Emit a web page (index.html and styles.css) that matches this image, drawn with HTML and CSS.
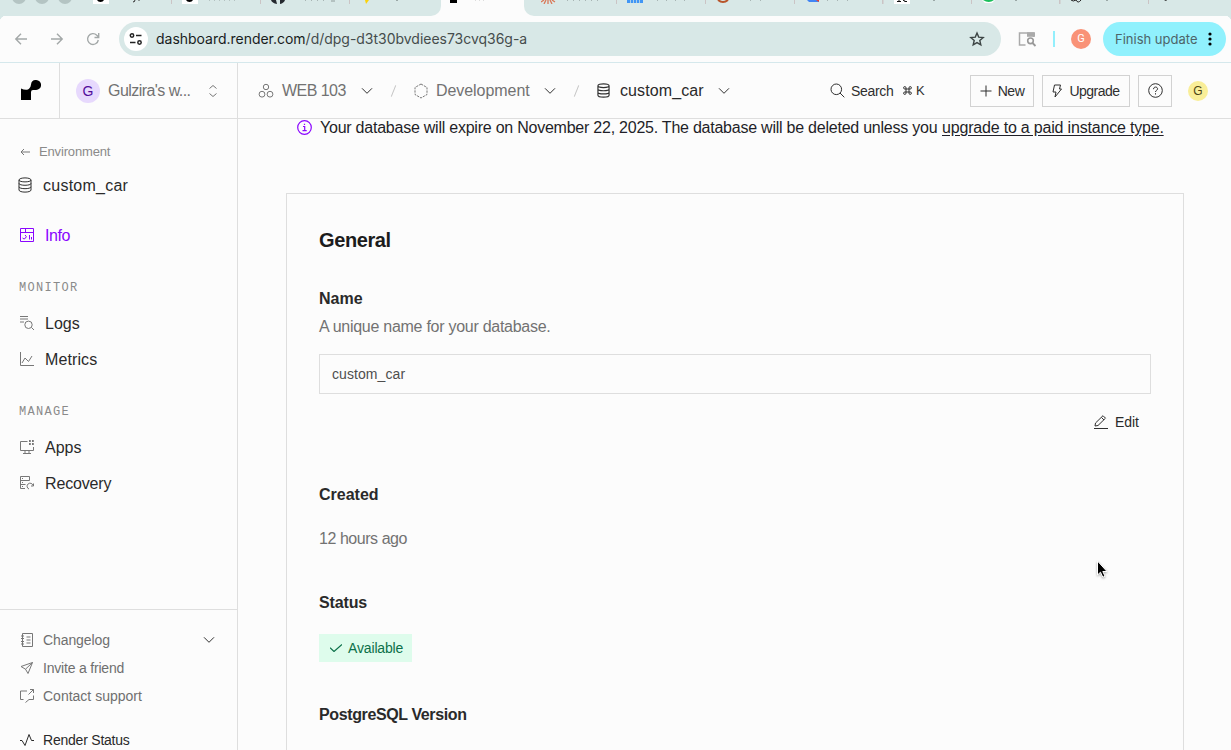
FILE: index.html
```html
<!DOCTYPE html>
<html lang="en">
<head>
<meta charset="utf-8">
<title>custom_car</title>
<link rel="stylesheet" href="styles.css">
</head>
<body>
<svg class="defs" width="0" height="0">
  <symbol id="db" viewBox="0 0 14 16"><path d="M1 3C1 .200 13 .200 13 3V13C13 15.800 1 15.800 1 13ZM1 3C1 5.500 13 5.500 13 3M1 6.400C1 8.900 13 8.900 13 6.400M1 9.800C1 12.300 13 12.300 13 9.800"/></symbol>
  <symbol id="chev" viewBox="0 0 12 8"><path d="M1 1.300 6 6.300 11 1.300"/></symbol>
</svg>
<div class="tabs">
  <div class="lights"><i></i><i></i><i></i></div>
  <div class="tab"><svg width="78" height="4"><path fill="#fff" d="M0 0h16v4H0z"/><path fill="#000" d="M4 0h7q-1 2-3.500 2T4 0"/><path stroke="#444" d="M42 0q0 2-2 2M46 0v1"/></svg></div>
  <div class="tab"><svg width="78" height="4"><path fill="#fff" d="M0 0h16v4H0z"/><path fill="#000" d="M4 0h7q-1 2-3.500 2T4 0"/><path stroke="#b4c2c1" stroke-dasharray="1 4" d="M27 .5h26"/></svg></div>
  <div class="tab"><svg width="78" height="4"><path fill="#24292f" d="M0 0h5l1 4Q1 3 0 0M9 0h5q-1 3-5 4z"/><path stroke="#a8b5b4" stroke-dasharray="1 5" d="M34 .5h20"/><path fill="#b4c2c1" d="M60 0h4v2h-4z"/></svg></div>
  <div class="tab plain"><svg width="78" height="4"><path fill="#fbd20b" d="M2 0h4L3 4z"/><path stroke="#9ba8a7" d="M33 .5h2"/></svg></div>
  <div class="tab active"><svg width="78" height="4"><path d="M0 0h7v3H0z"/><path stroke="#ddd" stroke-dasharray="1 3" d="M25 .5h9"/></svg></div>
  <div class="tab wide"><svg width="78" height="4"><path stroke="#d97757" stroke-width="1.300" d="m3 0-3 2M5 0 3 4M7 0v4M9 0l2 4M11 0l3 2"/><path stroke="#a8b5b4" stroke-dasharray="1 5" d="M26 .5h32"/></svg></div>
  <div class="tab"><svg width="78" height="4"><path fill="#4096f5" d="M0 0h16v3H0z"/><path stroke="#d9e8e7" stroke-width=".7" d="M3.500 0v3M6.500 0v3M9.500 0v3M12.500 0v3"/><path stroke="#a8b5b4" stroke-dasharray="1 8" d="M30 .5h30"/></svg></div>
  <div class="tab"><svg width="78" height="4"><path fill="none" stroke="#b8552b" stroke-width="2" d="M2 0q5 4 10 0"/><path stroke="#a8b5b4" stroke-dasharray="1 9" d="M34 .5h20"/></svg></div>
  <div class="tab"><svg width="78" height="4"><path fill="#4285f4" d="M2 0h12v2H4z"/><path fill="#ea4335" d="M11 0h3v2z"/><path stroke="#a8b5b4" stroke-dasharray="1 9" d="M22 .5h24"/></svg></div>
  <div class="tab"><svg width="78" height="4"><path fill="#fff" d="M0 0h16v4H0z"/><path stroke="#111" d="M3 1.500h4M9 0l2 1.500h2M5 0v2"/><path stroke="#9ba8a7" d="M39 .5h2"/></svg></div>
  <div class="tab"><svg width="78" height="4"><path fill="#fff" d="M0 0h13l-3 3H3z"/><path fill="#1bbf5c" d="M1 0h11Q7 4 1 0"/><path stroke="#9ba8a7" d="M33 .5h2"/></svg></div>
  <div class="tab"><svg width="78" height="4"><path fill="none" stroke="#222" d="M0 0q2 2 5 0q2 4 5 0"/><path stroke="#9ba8a7" d="M35 .5h2"/></svg></div>
  <div class="tab plain"><svg width="60" height="4"><path fill="#222" d="M5 0h3l-1 1z"/></svg></div>
</div>
<div class="toolbar">
  <svg class="nav" width="14" height="14" viewBox="0 0 14 14"><path d="M13 7H2M7 1.800 1.800 7 7 12.200"/></svg>
  <svg class="nav" width="14" height="14" viewBox="0 0 14 14"><path d="M1 7h11M7 1.800 12.200 7 7 12.200"/></svg>
  <svg class="nav" width="14" height="14" viewBox="0 0 14 14"><path d="M12.300 8A5.400 5.400 0 1 1 10.800 3.200L12.700 5M12.700 1v4.500H8.500"/></svg>
  <div class="omni">
    <span class="tune"><svg width="14" height="14" viewBox="0 0 14 14"><circle cx="3" cy="3.500" r="1.700"/><path d="M7 3.500h5.500M1 10.500h5.500"/><circle cx="10.500" cy="10.500" r="1.700"/></svg></span>
    <span class="url"><b>dashboard.render.com</b>/d/dpg-d3t30bvdiees73cvq36g-a</span>
    <svg class="star" width="16" height="16" viewBox="0 0 16 16"><path d="m8 2 1.700 4.100 4.500.400-3.400 3 1 4.400L8 11.600l-3.800 2.300 1-4.400-3.400-3 4.500-.4z"/></svg>
  </div>
  <svg class="lens" width="19" height="16" viewBox="0 0 19 16"><path d="M7.500 14H1.500V2h14v4" fill="none" stroke="#aaa" stroke-width="1.500"/><path fill="#aaa" d="M9 1.300h8v4.500H9z"/><circle cx="12.500" cy="9.800" r="2.800" fill="none" stroke="#999" stroke-width="1.600"/><path stroke="#999" stroke-width="1.800" d="m14.500 12 3 3"/></svg>
  <i class="divider"></i>
  <span class="me">G</span>
  <div class="update"><span>Finish update</span><svg width="4" height="16"><circle cx="2" cy="3" r="1.600"/><circle cx="2" cy="8" r="1.600"/><circle cx="2" cy="13" r="1.600"/></svg></div>
</div>
<header class="top">
  <div class="logo"><svg width="20" height="20" viewBox="0 0 20 20"><path d="M15.200 0A5 5 0 0 0 10 4.400C9.600 7.500 8 9.800 5 9.800Q2.500 9.800 0 8.500V20h10v-8q0-2 2-2h3A5 5 0 1 0 15.200 0Z"/></svg></div>
  <div class="workspace"><span class="avatar">G</span><span class="wname">Gulzira's w...</span><svg class="line" width="10" height="14" viewBox="0 0 10 14"><path d="M1.500 4.500 5 1.500l3.500 3M1.500 9.500 5 12.500l3.500-3"/></svg></div>
  <nav class="crumbs">
    <svg class="line" width="16" height="16" viewBox="0 0 16 16"><circle cx="8" cy="4" r="2.700"/><circle cx="4" cy="11.200" r="2.900"/><circle cx="12" cy="11.200" r="2.900"/></svg>
    <span class="c1">WEB 103</span><svg class="line dark" width="12" height="8"><use href="#chev"/></svg>
    <span class="slash"></span>
    <svg class="line" width="14" height="16" viewBox="0 0 14 16"><path stroke-dasharray="2.300 1" d="M7 1 13 4.500v7L7 15 1 11.500v-7z"/></svg>
    <span class="c2">Development</span><svg class="line dark" width="12" height="8"><use href="#chev"/></svg>
    <span class="slash"></span>
    <svg class="line dark dbi" width="13" height="15"><use href="#db"/></svg>
    <span class="c3">custom_car</span><svg class="line dark" width="12" height="8"><use href="#chev"/></svg>
  </nav>
  <div class="actions">
    <div class="search"><svg class="line dark" width="15" height="15" viewBox="0 0 15 15"><circle cx="6.300" cy="6.300" r="5.300"/><path d="m10 10 4.300 4.300"/></svg><span class="s1">Search</span><svg class="line dark cmd" width="9" height="9" viewBox="0 0 9 9"><path d="M3 3h3v3H3zM3 3V1.800A1.200 1.200 0 1 0 1.800 3H3M6 3h1.200A1.200 1.200 0 1 0 6 1.800V3M6 6v1.200A1.200 1.200 0 1 0 7.200 6H6M3 6H1.800A1.200 1.200 0 1 0 3 7.200V6"/></svg><span class="key">K</span></div>
    <div class="btn new"><svg class="line dark" width="12" height="12" viewBox="0 0 12 12"><path d="M6 .5v11M.5 6h11"/></svg><span>New</span></div>
    <div class="btn up"><svg class="line dark" width="10" height="14" viewBox="0 0 10 14"><path d="M2.500 1h6L7.500 5h2L3 13l1-5H1z"/></svg><span>Upgrade</span></div>
    <div class="btn help"><svg class="line dark" width="15" height="15" viewBox="0 0 15 15"><circle cx="7.500" cy="7.500" r="6.800"/><path d="M5.500 6.200C5.500 3.300 9.600 3.500 9.600 5.900 9.600 7.400 7.500 7.200 7.500 9M7.500 10.200v1.300"/></svg></div>
    <span class="user">G</span>
  </div>
</header>
<div class="shell">
  <aside>
    <div class="back"><svg class="line" width="10" height="8" viewBox="0 0 10 8"><path d="M10 4H1M4 1 1 4l3 3"/></svg><span>Environment</span></div>
    <div class="svc"><svg class="line dark" width="14" height="16"><use href="#db"/></svg><span>custom_car</span></div>
    <div class="item on"><svg class="line" width="14" height="14" viewBox="0 0 14 14"><path d="M.5.500h13v13H.5zM.5 4.500h13M5.500.500v4M5 7a2 2 0 1 1-2.500 3M9.500 7v4.500M11.500 9v2.500"/></svg><span class="t-info">Info</span></div>
    <h6>MONITOR</h6>
    <div class="item"><svg class="line" width="14" height="14" viewBox="0 0 14 14"><path d="M0 .5h8M0 3h8M0 6h4M11.500 11.500 14 14"/><circle cx="8.500" cy="8.800" r="3.700"/></svg><span>Logs</span></div>
    <div class="item"><svg class="line" width="14" height="14" viewBox="0 0 14 14"><path d="M.5 0v13.500H14M2 11l3-5 3.500 3.500L12 4"/></svg><span class="t-met">Metrics</span></div>
    <h6 class="manage">MANAGE</h6>
    <div class="item"><svg class="line" width="14" height="14" viewBox="0 0 14 14"><path d="M7.500 1.500h-7v9h13V7M5 10.500v3M9 10.500v3M3 13.500h8"/><path stroke-width="1.800" stroke-dasharray="1.800 1.200" d="M9 1h5M9 4h5"/></svg><span class="t-apps">Apps</span></div>
    <div class="item"><svg class="line" width="14" height="14" viewBox="0 0 14 14"><path d="M5 12.500H.5V.500h9v4H.5M.5 8.500h5M2 2.500h1M2 6.500h1M2 10.500h1M9 13A3 3 0 1 1 13 9.500M13.500 7.500v2.500H11"/></svg><span class="t-rec">Recovery</span></div>
    <footer>
      <div class="f"><svg class="line" width="14" height="14" viewBox="0 0 14 14"><path d="M2.500.500h10v13h-10zM1 3h3M1 5.500h3M1 8.500h3M1 11h3M6.500 4h4M6.500 7h4M6.500 10h4"/></svg><span class="t-cl">Changelog</span><svg class="line dark end" width="12" height="8"><use href="#chev"/></svg></div>
      <div class="f"><svg class="line" width="14" height="14" viewBox="0 0 14 14"><path d="M12.500 1.500 1 5.500l4.500 2.700L8 12.500zM12.500 1.500l-7 6.700"/></svg><span class="t-inv">Invite a friend</span></div>
      <div class="f"><svg class="line" width="14" height="14" viewBox="0 0 14 14"><path d="M7 2H.5v8.500h3M13.500 6.500v4H9l-3.500 3M8.500 5.500l5-5M10 .5h3.500V4"/></svg><span>Contact support</span></div>
      <div class="f status"><svg class="line" width="14" height="14" viewBox="0 0 14 14"><path d="M0 7.500h2L5 12.500 9 1.500l2.500 6H14"/></svg><span class="t-st">Render Status</span></div>
    </footer>
  </aside>
  <main>
    <div class="notice"><svg width="15" height="15" viewBox="0 0 15 15"><circle cx="7.500" cy="7.500" r="6.800"/><path d="M6 6.500h1.700v4M5.500 10.700h4.200M7.500 3.700v1.300"/></svg><span class="n1">Your database will expire on November 22, 2025. The database will be deleted unless you</span><a class="n2">upgrade to a paid instance type.</a></div>
    <section class="card">
      <h2>General</h2>
      <h3 class="name">Name</h3>
      <p class="desc">A unique name for your database.</p>
      <div class="input"><span>custom_car</span></div>
      <div class="edit"><svg class="line dark" width="14" height="14" viewBox="0 0 14 14"><path d="M0 13.500h14M1 11l.5-3 7.500-7.300 2.500 2.500L4 10.500zM7.500 2.500 10 5"/></svg><span>Edit</span></div>
      <h3 class="created">Created</h3>
      <p class="ago">12 hours ago</p>
      <h3 class="stat">Status</h3>
      <div class="badge"><svg width="12" height="8" viewBox="0 0 12 8"><path d="m0 3.700 4 3.800L12 .5"/></svg><span>Available</span></div>
      <h3 class="pg">PostgreSQL Version</h3>
    </section>
  </main>
</div>
<svg class="cursor" width="14" height="20" viewBox="0 0 14 20"><path d="M1.500 1v14l3-2.800 2.300 5L9 16.200l-2.200-4.700H11z"/></svg>
</body>
</html>
```
FILE: styles.css
```css
* { box-sizing: border-box; margin: 0; padding: 0; }
body { width: 1231px; height: 750px; overflow: hidden; background: #fcfcfc; color: #2a2a2a; font: 16px/24px "Liberation Sans", Arial, sans-serif; display: flex; flex-direction: column; }
svg { flex: none; display: block; }
span, a { white-space: nowrap; }
.defs { position: absolute; }
.line { fill: none; stroke: #777; stroke-width: 1; }
.line.dark { stroke: #2f2f2f; }

.tabs { height: 16px; flex: none; background: #fcfcfc; display: flex; overflow: hidden; }
.lights { width: 83px; flex: none; display: flex; gap: 9px; padding: 0 0 12px 12px; height: 16px; overflow: hidden; align-items: flex-end; background: #d8e8e7; }
.lights i { width: 14px; height: 14px; border-radius: 50%; background: #b4c4c3; flex: none; }
.tab { width: 89px; flex: none; padding-left: 10px; background: linear-gradient(#cbc4c5, #cbc4c5) right top / 1.5px 4px no-repeat #d8e8e7; }
.tab.plain { background: #d8e8e7; }
.tab:nth-child(5) { width: 91px; padding-left: 13px; border-bottom-right-radius: 10px; }
.tab.active { width: 83px; padding-left: 9px; background: #fcfcfc; }
.tab.wide { width: 93px; padding-left: 17px; border-bottom-left-radius: 10px; }
.tab:nth-child(n+10) { width: 88.500px; }

.toolbar { height: 47px; flex: none; display: flex; align-items: center; border-bottom: 1px solid #d5e8ec; padding-left: 14px; background: radial-gradient(circle at 6px 6px, #fcfcfc 6px, #d8e8e7 6.500px) left top / 6px 6px no-repeat, radial-gradient(circle at 0 6px, #fcfcfc 6px, #d8e8e7 6.500px) right top / 6px 6px no-repeat #fcfcfc; }
.nav { fill: none; stroke: #a3a8a8; stroke-width: 1.400; margin-right: 22px; }
.omni { width: 882px; height: 34px; border-radius: 17px; background: #d8e8e7; display: flex; align-items: center; padding: 0 16px 0 5px; margin-left: -3px; }
.tune { width: 24px; height: 24px; border-radius: 50%; background: #fff; display: flex; align-items: center; justify-content: center; margin-right: 8px; }
.tune svg { fill: none; stroke: #222; stroke-width: 1.500; }
.url { font: 14px/20px Inter, sans-serif; color: #454c4c; letter-spacing: -.02px; }
.url b { font-weight: 400; color: #181d1d; }
.star { margin-left: auto; fill: none; stroke: #3c4444; stroke-width: 1.400; }
.lens { margin-left: 17px; }
.divider { width: 2px; height: 16px; background: #93effc; margin-left: 16px; }
.me { width: 20px; height: 20px; border-radius: 50%; background: #f99277; color: #fff; font: 11px/20px Roboto, sans-serif; text-align: center; margin-left: 16px; }
.update { width: 123px; height: 34px; border-radius: 17px; background: #90f1fd; margin-left: 12px; display: flex; align-items: center; padding: 0 14px 0 12px; justify-content: space-between; font: 13px/20px Inter, sans-serif; color: #4d6569; }

.top { height: 56px; flex: none; border-bottom: 1px solid #dedede; display: flex; color: #727272; }
.logo { width: 60px; border-right: 1px solid #dedede; display: flex; align-items: center; padding: 0 0 1px 21px; }
.workspace { width: 178px; border-right: 1px solid #dedede; display: flex; align-items: center; padding: 0 19px 0 16px; }
.wname { letter-spacing: -.55px; }
.avatar { width: 24px; height: 24px; border-radius: 50%; background: #e7d9fd; color: #510d9c; font-size: 14px; text-align: center; margin-right: 8px; }
.workspace svg { margin-left: auto; }
.crumbs { width: 570px; display: flex; align-items: center; padding-left: 20px; }
.crumbs span:not(.slash) { margin-left: 8px; flex: none; }
.crumbs .c1 { width: 64px; margin-right: 15px; letter-spacing: -.55px; }
.crumbs .c2 { width: 94px; margin-right: 14px; letter-spacing: -.06px; }
.crumbs .dbi { stroke-width: 1.250; }
.crumbs .c3 { width: 84px; margin-right: 14px; color: #2a2a2a; margin-left: 10px !important; letter-spacing: .1px; }
.slash { width: 1px; height: 12px; background: #c4c4c4; transform: rotate(22deg); margin: 0 20px; flex: none; }
.actions { flex: 1; display: flex; align-items: center; font-size: 14px; color: #2f2f2f; padding-left: 22px; }
.search { display: flex; align-items: center; width: 140px; }
.search .s1 { margin: 0 10px 0 6px; width: 42px; letter-spacing: -.5px; font-size: 14px; }
.search .s1 { letter-spacing: -.55px; }
.search .s1 { letter-spacing: -.6px; }
.search .s1 { letter-spacing: -.3px; }
.search .cmd { margin-right: 4px; }
.search .key { font-size: 13px; }
.btn { height: 32px; border: 1px solid #d2d2d2; display: flex; align-items: center; justify-content: center; gap: 6px; margin-right: 8px; }
.new { width: 64px; }
.new span { letter-spacing: -.5px; }
.up { width: 88px; gap: 7px; }
.up span { letter-spacing: -.5px; }
.help { width: 34px; margin-right: 16px; }
.user { width: 20px; height: 20px; border-radius: 50%; background: #f9ee98; color: #4d4514; font-size: 12px; line-height: 20px; text-align: center; }

.shell { flex: 1; min-height: 0; display: flex; }
aside { width: 238px; flex: none; border-right: 1px solid #dedede; display: flex; flex-direction: column; padding-top: 21px; }
.back { height: 24px; display: flex; align-items: center; padding-left: 20px; gap: 9px; font-size: 13px; color: #8a8a8a; letter-spacing: -.15px; }
.svc { height: 24px; margin-top: 9px; display: flex; align-items: center; padding-left: 18px; gap: 11px; letter-spacing: .25px; }
.svc span, .item span, .notice span, .notice a { padding-top: 2px; }
.item { height: 36px; display: flex; align-items: center; padding-left: 20px; gap: 11px; }
.item.on { margin-top: 20px; color: #8a05ff; }
.item.on .line { stroke: #8a05ff; }
.t-info { letter-spacing: -.4px; }
.t-met { letter-spacing: .1px; }
.t-rec { letter-spacing: -.15px; }
h6 { font: 12px/18px "Liberation Mono", monospace; height: 16px; letter-spacing: 1.300px; color: #8a8a8a; padding-left: 19px; margin: 26px 0 10px; }
footer { margin-top: auto; height: 141px; flex: none; border-top: 1px solid #dedede; padding-top: 16px; color: #6f6f6f; font-size: 14px; }
.f { height: 28px; display: flex; align-items: center; padding-left: 20px; gap: 9px; }
.t-cl { letter-spacing: -.1px; }
.t-inv { letter-spacing: -.2px; }
.t-st { letter-spacing: -.22px; }
.end { margin: 0 22px 0 auto; }
.status { margin-top: 16px; color: #2a2a2a; }
.status .line { stroke: #2a2a2a; }

main { flex: 1; padding: 0 47px 0 48px; overflow: hidden; }
.notice { height: 24px; margin-top: -4px; display: flex; align-items: center; padding-left: 10.500px; color: #1f1f28; }
.notice svg { fill: none; stroke: #8a05ff; stroke-width: 1.200; }
.notice .n1 { margin-left: 8.500px; width: 618px; flex: none; letter-spacing: -.235px; }
.n2 { margin-left: 4px; text-decoration: underline; text-underline-offset: 2px; letter-spacing: -.19px; }
.card { margin-top: 54px; border: 1px solid #dedede; height: 700px; padding: 32px; }
h2 { font-size: 20px; line-height: 28px; color: #1c1c1c; letter-spacing: -.4px; }
h3 { font-size: 16px; line-height: 26px; height: 24px; color: #2a2a2a; }
p { line-height: 26px; height: 24px; color: #727272; }
.name { margin-top: 32px; }
.desc { margin-top: 4px; letter-spacing: -.27px; }
.input { height: 40px; margin-top: 16px; border: 1px solid #dedede; padding: 7px 12px; font-size: 14px; color: #4e4e4e; letter-spacing: .08px; }
.edit { height: 40px; margin-top: 8px; padding-right: 12px; display: flex; align-items: center; justify-content: flex-end; gap: 7px; font-size: 14px; }
.created { margin-top: 40px; }
.ago { margin-top: 20px; letter-spacing: -.45px; }
.stat { margin-top: 40px; letter-spacing: -.15px; }
.badge { margin-top: 20px; width: 93px; height: 28px; background: #defcec; color: #0c7049; display: flex; align-items: center; padding-left: 11px; gap: 6px; font-size: 14px; letter-spacing: -.15px; }
.badge svg { fill: none; stroke: #0c7049; stroke-width: 1.200; }
.pg { margin-top: 40px; letter-spacing: -.38px; }
.cursor { position: absolute; left: 1096px; top: 560px; fill: #000; stroke: #fff; stroke-width: 1; filter: drop-shadow(0 1px 1px #0005); }
```
